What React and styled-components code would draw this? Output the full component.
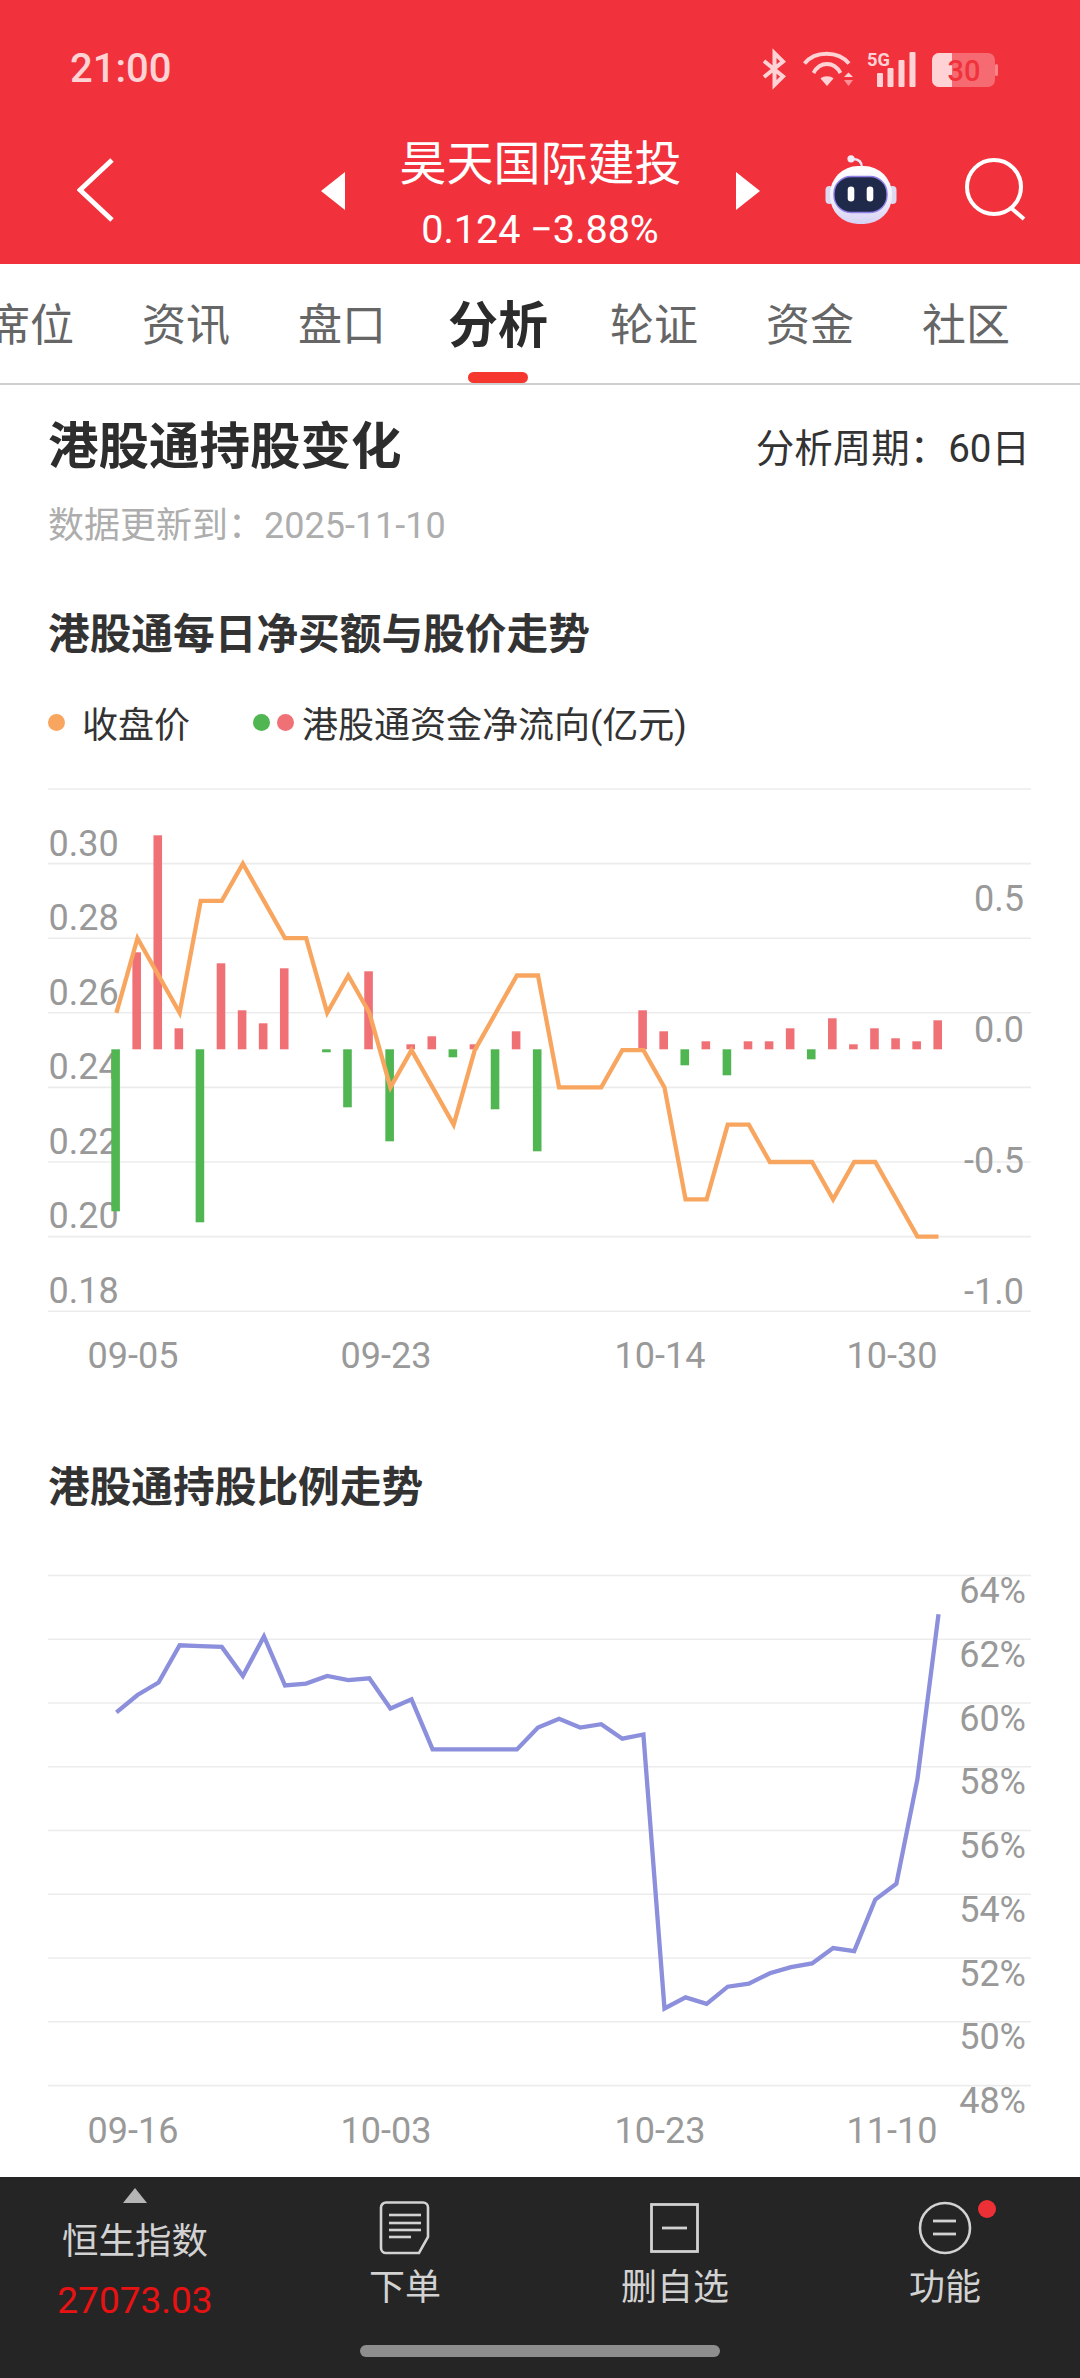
import React from 'react';
import styled, { createGlobalStyle } from 'styled-components';

const GlobalStyle = createGlobalStyle`
  html, body {
    margin: 0;
    padding: 0;
    background: #fff;
  }
  body {
    width: 1080px;
    height: 2378px;
    overflow: hidden;
    font-family: Roboto, "Noto Sans CJK SC", sans-serif;
  }
`;

const RED = '#f1323c';

const Page = styled.div`
  width: 1080px;
  height: 2378px;
  display: flex;
  flex-direction: column;
  overflow: hidden;
`;

const Header = styled.header`
  height: 264px;
  background: ${RED};
  color: #fff;
`;

const StatusBar = styled.div`
  height: 120px;
  display: flex;
  align-items: flex-start;
  justify-content: space-between;
  padding: 0 82px 0 70px;
`;

const Clock = styled.div`
  font-size: 40px;
  font-weight: 500;
  line-height: 48px;
  margin-top: 45px;
  color: #ffd3d5;
`;

const StatusIcons = styled.div`
  display: flex;
  align-items: flex-start;
  margin-top: 50px;
  svg { display: block; overflow: visible; }
`;

const NavBar = styled.div`
  height: 144px;
  display: grid;
  grid-template-columns: 1fr auto 1fr;
  align-items: center;
`;

const NavSide = styled.div`
  display: flex;
  align-items: center;
  margin-top: -5px;
  justify-content: ${({ $right }) => ($right ? 'flex-end' : 'flex-start')};
  padding: ${({ $right }) => ($right ? '0 52px 0 0' : '0 0 0 77px')};
  gap: 66px;
  svg { display: block; }
`;

const StockSwitch = styled.div`
  display: flex;
  align-items: center;
  gap: 55px;
`;

const Triangle = styled.div`
  width: 0;
  height: 0;
  margin-top: -2px;
  border-top: 19px solid transparent;
  border-bottom: 19px solid transparent;
  ${({ $right }) =>
    $right ? 'border-left: 24px solid #fff;' : 'border-right: 24px solid #fff;'}
`;

const StockInfo = styled.div`
  width: 281px;
  padding-top: 14px;
  height: 144px;
  box-sizing: border-box;
  text-align: center;
`;

const StockName = styled.div`
  font-size: 47px;
  line-height: 60px;
  white-space: nowrap;
`;

const StockPrice = styled.div`
  font-size: 39.5px;
  line-height: 50px;
  margin-top: 11px;
  white-space: nowrap;
`;

const TabBar = styled.nav`
  height: 121px;
  box-sizing: border-box;
  display: flex;
  border-bottom: 2px solid #cfcfcf;
  margin-left: -48px;
`;

const Tab = styled.div`
  position: relative;
  flex: 0 0 156px;
  height: 119px;
  line-height: 124px;
  text-align: center;
  font-size: ${({ $active }) => ($active ? '50px' : '44px')};
  font-weight: ${({ $active }) => ($active ? 700 : 400)};
  color: ${({ $active }) => ($active ? '#2b2b2b' : '#666')};
  &::after {
    content: '';
    display: ${({ $active }) => ($active ? 'block' : 'none')};
    position: absolute;
    left: 48px;
    bottom: 0;
    width: 60px;
    height: 11px;
    border-radius: 6px;
    background: #f5372f;
  }
`;

const Content = styled.main`
  display: flex;
  flex-direction: column;
`;

const TitleRow = styled.div`
  height: 122px;
  padding: 0 50px 0 48px;
  display: flex;
  align-items: center;
  justify-content: space-between;
`;

const PageTitle = styled.h1`
  margin: -8px 0 0;
  font-size: 50.5px;
  font-weight: 700;
  color: #2d2d2d;
`;

const Period = styled.div`
  margin-top: -3px;
  font-size: 38.5px;
  color: #333;
`;

const Updated = styled.div`
  height: 36px;
  line-height: 38px;
  padding-left: 48px;
  font-size: 36px;
  color: #adadad;
`;

const SectionTitle = styled.h2`
  margin: ${({ $top }) => $top}px 0 0;
  height: 46px;
  line-height: 46px;
  padding-left: 48px;
  font-size: 41.7px;
  font-weight: 700;
  color: #333;
`;

const Legend = styled.div`
  height: 44px;
  margin-top: 42px;
  padding-left: 48px;
  display: flex;
  align-items: center;
  font-size: 36px;
  color: #333;
`;

const Dot = styled.span`
  width: 17px;
  height: 17px;
  border-radius: 50%;
  background: ${({ $color }) => $color};
  margin-left: ${({ $before }) => $before || 0}px;
  margin-right: ${({ $gap }) => $gap}px;
`;

const ChartSvg = styled.svg`
  display: block;
  width: 1080px;
  height: ${({ $h }) => $h}px;
  margin-top: ${({ $top }) => $top}px;
`;

const GridLine = styled.line`
  stroke: #ececec;
  stroke-width: 1.6;
`;

const AxisText = styled.text`
  font-family: Roboto, sans-serif;
  font-size: 36px;
  fill: #999;
  text-anchor: ${({ $anchor }) => $anchor || 'start'};
`;

const FlowBar = styled.rect`
  fill: ${({ $up }) => ($up ? '#ef7175' : '#4fb652')};
`;

const TrendLine = styled.polyline`
  fill: none;
  stroke: ${({ $color }) => $color};
  stroke-width: 4.3;
  stroke-linejoin: miter;
`;

const BottomBar = styled.footer`
  margin-top: 17px;
  height: 201px;
  background: #252525;
  display: flex;
  flex-direction: column;
`;

const BottomItems = styled.div`
  height: 168px;
  display: grid;
  grid-template-columns: repeat(4, 270px);
`;

const BottomItem = styled.div`
  display: flex;
  flex-direction: column;
  align-items: center;
  padding-top: 24px;
  color: #d2d2d2;
`;

const IndexItem = styled(BottomItem)`
  padding-top: 11px;
`;

const UpArrow = styled.div`
  width: 0;
  height: 0;
  border-left: 12.5px solid transparent;
  border-right: 12.5px solid transparent;
  border-bottom: 15px solid #b5b5b5;
`;

const IndexName = styled.div`
  height: 44px;
  line-height: 44px;
  margin-top: 17px;
  font-size: 36.5px;
`;

const IndexValue = styled.div`
  height: 44px;
  line-height: 44px;
  margin-top: 15px;
  font-size: 37px;
  font-weight: 400;
  color: #e81212;
`;

const IconWrap = styled.div`
  position: relative;
  width: 54px;
  height: 54px;
  svg { display: block; }
`;

const Badge = styled.span`
  position: absolute;
  left: 60px;
  top: -1px;
  width: 18px;
  height: 18px;
  border-radius: 50%;
  background: #ec3035;
`;

const ItemLabel = styled.div`
  height: 40px;
  line-height: 40px;
  margin-top: 13px;
  font-size: 36px;
`;

const HomeIndicator = styled.div`
  width: 360px;
  height: 12px;
  margin: 0 auto;
  border-radius: 6px;
  background: #8e8e8e;
`;

// charts share the same 40 trading days on x
const dayX = (i) => 115.6 + 21.08 * i;

// closing price in cents
const prices = [
  26, 28, 27, 26, 29, 29, 30, 29, 28, 28, 26, 27, 26, 24, 25, 24, 23, 25, 26, 27,
  27, 24, 24, 24, 25, 25, 24, 21, 21, 23, 23, 22, 22, 22, 21, 22, 22, 21, 20, 20,
];

// net flow, already in px from the zero line
const flows = [
  -162, 97, 214, 21, -173, 86, 39, 26, 81, 0, -3, -58, 78, -92, 5, 13, -8, 5, -60, 18,
  -102, 0, 0, 0, 0, 39, 18, -16, 8, -26, 8, 8, 21, -10, 31, 5, 21, 11, 8, 29,
];

// holding ratio line, px from the top grid line
const holdings = [
  137, 119.7, 107.2, 70, 70.8, 71.6, 100.7, 61.2, 110.2, 108.3, 100.7, 104.9, 103, 133.2,
  124, 174.1, 174.1, 174.1, 174.1, 174.1, 152.3, 143.5, 152.3, 148.9, 163.4, 159.2, 433.2,
  422.1, 428.6, 411.4, 408.4, 398, 391.9, 388.1, 372.7, 375.8, 324.2, 308.5, 203.6, 39,
];

const priceY = (cents) => 19 + ((32 - cents) / 2) * 74.6;
const ZERO_Y = 279.3;

const BackIcon = () => (
  <svg width="40" height="66" viewBox="0 0 40 66">
    <polyline points="35,3 3,33 35,63" fill="none" stroke="#fff" strokeWidth="5" />
  </svg>
);

const RobotIcon = () => (
  <svg width="74" height="70" viewBox="0 0 74 70">
    <defs>
      <linearGradient id="robotShell" x1="0" y1="0" x2="0" y2="1">
        <stop offset="0" stopColor="#ffffff" />
        <stop offset="0.6" stopColor="#f0edfb" />
        <stop offset="1" stopColor="#d6d1f4" />
      </linearGradient>
    </defs>
    <path d="M29 4 C35 4 38 7 38 13" fill="none" stroke="#e8e5f6" strokeWidth="2.4" />
    <circle cx="27" cy="3.8" r="3.6" fill="#f0edf9" />
    <rect x="1.5" y="31" width="8" height="18" rx="4" fill="#dcd9f1" />
    <rect x="64.5" y="31" width="8" height="18" rx="4" fill="#dcd9f1" />
    <rect x="6" y="11" width="62" height="58" rx="28" fill="url(#robotShell)" />
    <rect x="10" y="21.5" width="53" height="36" rx="17" fill="#1f2a4b" stroke="#8f7fe6" strokeWidth="1.4" />
    <rect x="23.7" y="31.5" width="6.6" height="15" rx="3.3" fill="#fff" />
    <rect x="42.7" y="31.5" width="6.6" height="15" rx="3.3" fill="#fff" />
  </svg>
);

const SearchIcon = () => (
  <svg width="64" height="64" viewBox="0 0 64 64">
    <circle cx="30" cy="29" r="27" fill="none" stroke="#fff" strokeWidth="4" />
    <line x1="47" y1="50" x2="60" y2="61" stroke="#fff" strokeWidth="4" />
  </svg>
);

const BluetoothIcon = () => (
  <svg width="24" height="38" viewBox="0 0 24 38">
    <polyline points="2,11 21,26.5 12.5,35 12.5,3 21,11.5 2,27" fill="none" stroke="#ffd3d5" strokeWidth="4" />
  </svg>
);

const WifiIcon = () => (
  <svg width="51" height="36" viewBox="0 0 51 36" style={{ marginLeft: 16, marginTop: 1 }}>
    <g fill="none" stroke="#ffd3d5" strokeWidth="3.8">
      <path d="M2.5 12.5 C13 -0.5 36 -0.5 47 12.5" />
      <path d="M11.5 22 C18 10 32 10 38.5 22" />
    </g>
    <path d="M25 35 L18.5 27.5 C21.5 24.5 28.5 24.5 31.5 27.5 Z" fill="#ffd3d5" />
    <path d="M46.5 21.5 L51 26 H42 Z" fill="#ffd3d5" />
    <path d="M42 29 H51 L46.5 35 Z" fill="#ff8f95" />
  </svg>
);

const SignalIcon = () => (
  <svg width="50" height="38" viewBox="0 0 50 38" style={{ marginLeft: 14 }}>
    <text x="0" y="15.5" fontFamily="Roboto, sans-serif" fontWeight="700" fontSize="19" fill="#ffd3d5" textLength="23" lengthAdjust="spacingAndGlyphs">5G</text>
    <g fill="#ffd3d5">
      <rect x="10" y="23" width="6" height="14" rx="1" />
      <rect x="20.5" y="18" width="6" height="19" rx="1" />
      <rect x="31.5" y="10" width="6" height="27" rx="1" />
      <rect x="42.5" y="2" width="6" height="35" rx="1" />
    </g>
  </svg>
);

const BatteryIcon = () => (
  <svg width="66" height="36" viewBox="0 0 66 36" style={{ marginLeft: 15, marginTop: 3 }}>
    <rect x="0" y="0" width="63" height="34" rx="7" fill="#ffd3d5" fillOpacity="0.35" />
    <path d="M7 0 H20 V34 H7 A7 7 0 0 1 0 27 V7 A7 7 0 0 1 7 0 Z" fill="#ffd3d5" />
    <rect x="63" y="11" width="3" height="12" rx="1.5" fill="#ffd3d5" fillOpacity="0.5" />
    <text x="32" y="28" textAnchor="middle" fontFamily="Roboto, sans-serif" fontWeight="500" fontSize="29" fill={RED}>30</text>
  </svg>
);

const OrderIcon = () => (
  <svg width="54" height="54" viewBox="0 0 54 54">
    <path d="M8 1.5 H45 A5 5 0 0 1 50 6.5 V36 L41 52 H8 A5 5 0 0 1 3 47 V6.5 A5 5 0 0 1 8 1.5 Z" fill="none" stroke="#d2d2d2" strokeWidth="2.6" />
    <g stroke="#d2d2d2" strokeWidth="2.6">
      <line x1="11" y1="14" x2="43" y2="14" />
      <line x1="11" y1="22" x2="43" y2="22" />
      <line x1="11" y1="29" x2="43" y2="29" />
      <line x1="11" y1="36" x2="33" y2="36" />
    </g>
  </svg>
);

const RemoveIcon = () => (
  <svg width="54" height="54" viewBox="0 0 54 54">
    <rect x="3.5" y="3.5" width="46" height="47" fill="none" stroke="#d2d2d2" strokeWidth="2.8" />
    <line x1="14" y1="27" x2="39" y2="27" stroke="#d2d2d2" strokeWidth="2.8" />
  </svg>
);

const MenuIcon = () => (
  <svg width="54" height="54" viewBox="0 0 54 54">
    <circle cx="27" cy="27" r="25" fill="none" stroke="#d2d2d2" strokeWidth="2.6" />
    <line x1="15" y1="20" x2="38" y2="20" stroke="#d2d2d2" strokeWidth="2.8" />
    <line x1="15" y1="33" x2="38" y2="33" stroke="#d2d2d2" strokeWidth="2.8" />
  </svg>
);

const FlowChart = () => (
  <ChartSvg $h={610} $top={26} viewBox="0 0 1080 610">
    {[0, 1, 2, 3, 4, 5, 6, 7].map((i) => (
      <GridLine key={i} x1="48" x2="1031" y1={19 + i * 74.6} y2={19 + i * 74.6} />
    ))}
    {['0.30', '0.28', '0.26', '0.24', '0.22', '0.20', '0.18'].map((t, i) => (
      <AxisText key={t} x="48.5" y={85.5 + i * 74.5}>{t}</AxisText>
    ))}
    {['0.5', '0.0', '-0.5', '-1.0'].map((t, i) => (
      <AxisText key={t} $anchor="end" x="1024" y={141 + i * 131}>{t}</AxisText>
    ))}
    {flows.map((v, i) =>
      v === 0 ? null : (
        <FlowBar
          key={i}
          $up={v > 0}
          x={dayX(i) - 4.3}
          y={v > 0 ? ZERO_Y - v : ZERO_Y}
          width="8.6"
          height={Math.abs(v)}
        />
      )
    )}
    <TrendLine
      $color="#f8a65f"
      points={prices.map((p, i) => `${dayX(i) + 0.8},${priceY(p)}`).join(' ')}
    />
    {[['09-05', 133], ['09-23', 386], ['10-14', 660], ['10-30', 892]].map(([t, x]) => (
      <AxisText key={t} $anchor="middle" x={x} y="597.5">{t}</AxisText>
    ))}
  </ChartSvg>
);

const HoldingChart = () => (
  <ChartSvg $h={600} $top={49} viewBox="0 0 1080 600">
    {[0, 1, 2, 3, 4, 5, 6, 7, 8].map((i) => (
      <GridLine key={i} x1="48" x2="1031" y1={15.5 + i * 63.76} y2={15.5 + i * 63.76} />
    ))}
    {['64%', '62%', '60%', '58%', '56%', '54%', '52%', '50%', '48%'].map((t, i) => (
      <AxisText key={t} $anchor="end" x="1026" y={43 + i * 63.75}>{t}</AxisText>
    ))}
    <TrendLine
      $color="#8b8fdc"
      points={holdings.map((v, i) => `${dayX(i) + 0.8},${15.3 + v}`).join(' ')}
    />
    {[['09-16', 133], ['10-03', 386], ['10-23', 660], ['11-10', 892]].map(([t, x]) => (
      <AxisText key={t} $anchor="middle" x={x} y="583">{t}</AxisText>
    ))}
  </ChartSvg>
);

const tabs = ['席位', '资讯', '盘口', '分析', '轮证', '资金', '社区'];

export default function App() {
  return (
    <Page>
      <GlobalStyle />
      <Header>
        <StatusBar>
          <Clock>21:00</Clock>
          <StatusIcons>
            <BluetoothIcon />
            <WifiIcon />
            <SignalIcon />
            <BatteryIcon />
          </StatusIcons>
        </StatusBar>
        <NavBar>
          <NavSide>
            <BackIcon />
          </NavSide>
          <StockSwitch>
            <Triangle />
            <StockInfo>
              <StockName>昊天国际建投</StockName>
              <StockPrice>0.124 −3.88%</StockPrice>
            </StockInfo>
            <Triangle $right />
          </StockSwitch>
          <NavSide $right>
            <RobotIcon />
            <SearchIcon />
          </NavSide>
        </NavBar>
      </Header>
      <TabBar>
        {tabs.map((t) => (
          <Tab key={t} $active={t === '分析'}>{t}</Tab>
        ))}
      </TabBar>
      <Content>
        <TitleRow>
          <PageTitle>港股通持股变化</PageTitle>
          <Period>分析周期：60日</Period>
        </TitleRow>
        <Updated>数据更新到：2025-11-10</Updated>
        <SectionTitle $top={69}>港股通每日净买额与股价走势</SectionTitle>
        <Legend>
          <Dot $color="#f8a65f" $gap={17} />
          <span>收盘价</span>
          <Dot $color="#4fb652" $before={63} $gap={7} />
          <Dot $color="#ef7175" $gap={8} />
          <span>港股通资金净流向(亿元)</span>
        </Legend>
        <FlowChart />
        <SectionTitle $top={85}>港股通持股比例走势</SectionTitle>
        <HoldingChart />
      </Content>
      <BottomBar>
        <BottomItems>
          <IndexItem>
            <UpArrow />
            <IndexName>恒生指数</IndexName>
            <IndexValue>27073.03</IndexValue>
          </IndexItem>
          <BottomItem>
            <IconWrap><OrderIcon /></IconWrap>
            <ItemLabel>下单</ItemLabel>
          </BottomItem>
          <BottomItem>
            <IconWrap><RemoveIcon /></IconWrap>
            <ItemLabel>删自选</ItemLabel>
          </BottomItem>
          <BottomItem>
            <IconWrap>
              <MenuIcon />
              <Badge />
            </IconWrap>
            <ItemLabel>功能</ItemLabel>
          </BottomItem>
        </BottomItems>
        <HomeIndicator />
      </BottomBar>
    </Page>
  );
}
